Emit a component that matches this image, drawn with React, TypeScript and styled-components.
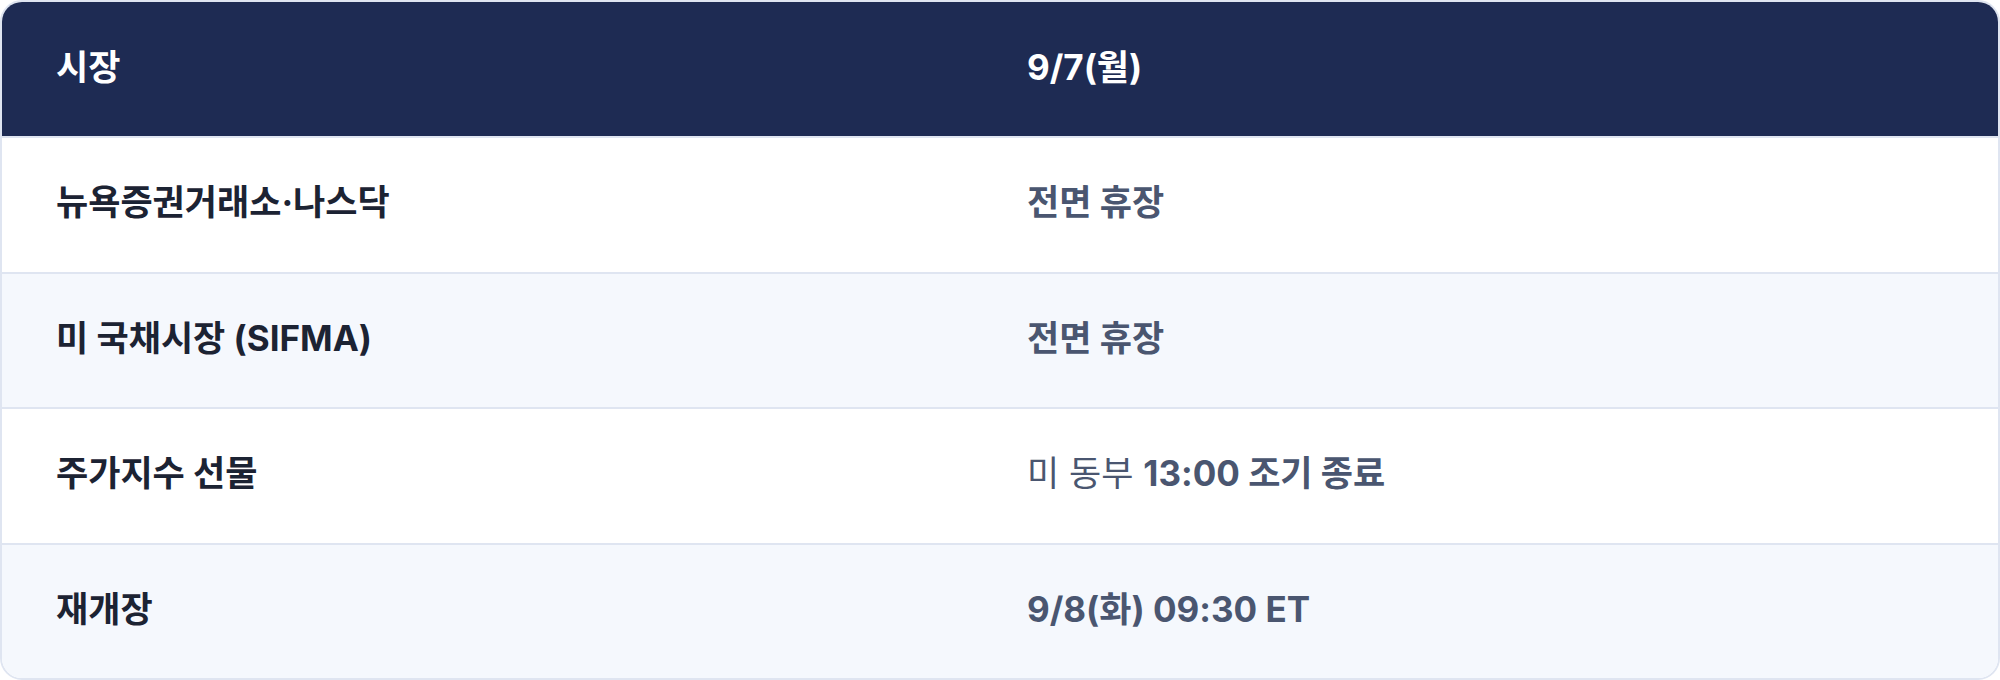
import React from "react";
import styled, { createGlobalStyle } from "styled-components";

const Global = createGlobalStyle`
  html, body { margin: 0; padding: 0; background: #ffffff; }
  body { font-family: Inter, "Noto Sans CJK KR", sans-serif; }
`;

const Table = styled.div`
  box-sizing: border-box;
  width: 2000px;
  height: 680px;
  border: 2px solid #dfe5f1;
  border-radius: 22px;
  overflow: hidden;
  display: grid;
  grid-template-rows: 134px repeat(4, 1fr);
`;

const Row = styled.div<{ $variant: "head" | "odd" | "even" }>`
  display: grid;
  grid-template-columns: 971px 1fr;
  align-items: center;
  background: ${(p) =>
    p.$variant === "head" ? "#1e2b53" : p.$variant === "even" ? "#f5f8fd" : "#ffffff"};
  border-top: ${(p) => (p.$variant === "head" ? "none" : "2px solid #dfe5f1")};
`;

const Cell = styled.div`
  padding: 0 0 10px 54px;
  font-size: 35px;
  font-weight: 700;
`;

const HeadCell = styled(Cell)`
  color: #ffffff;
`;

const Label = styled(Cell)`
  color: #1c2333;
`;

const Value = styled(Cell)`
  color: #4a5670;
  font-weight: 400;
`;

const Strong = styled.strong`
  font-weight: 700;
`;

export default function App() {
  return (
    <>
      <Global />
      <Table>
        <Row $variant="head">
          <HeadCell>시장</HeadCell>
          <HeadCell>9/7(월)</HeadCell>
        </Row>
        <Row $variant="odd">
          <Label>뉴욕증권거래소·나스닥</Label>
          <Value><Strong>전면 휴장</Strong></Value>
        </Row>
        <Row $variant="even">
          <Label>미 국채시장 (SIFMA)</Label>
          <Value><Strong>전면 휴장</Strong></Value>
        </Row>
        <Row $variant="odd">
          <Label>주가지수 선물</Label>
          <Value>미 동부 <Strong>13:00 조기 종료</Strong></Value>
        </Row>
        <Row $variant="even">
          <Label>재개장</Label>
          <Value><Strong>9/8(화) 09:30 ET</Strong></Value>
        </Row>
      </Table>
    </>
  );
}
